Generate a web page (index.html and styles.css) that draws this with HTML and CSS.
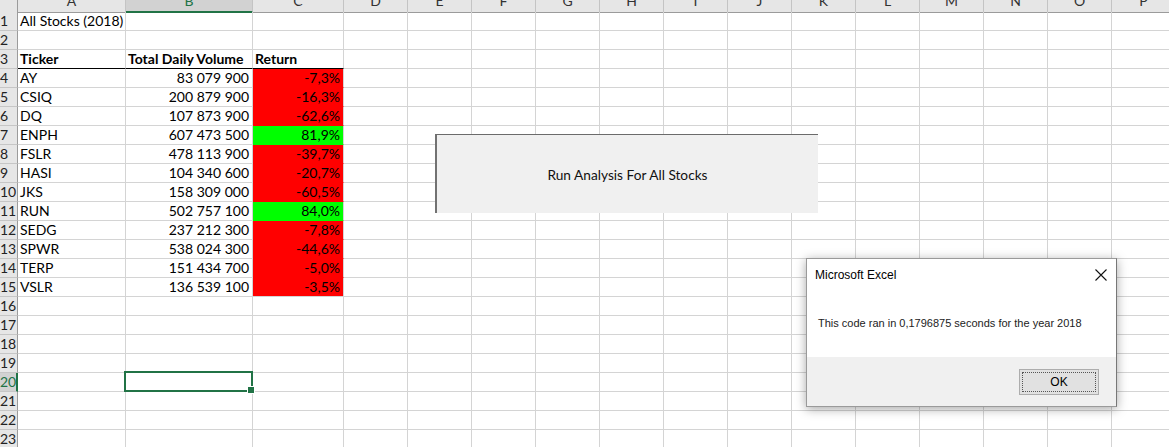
FILE: index.html
```html
<!DOCTYPE html>
<html>
<head>
<meta charset="utf-8">
<title>All Stocks (2018)</title>
<link rel="stylesheet" href="styles.css">
</head>
<body>
<div class="sheet">
  <div class="grid">
    <div class="row head">
      <div class="corner"></div>
      <div>A</div><div class="hsel">B</div><div>C</div><div>D</div><div>E</div><div>F</div><div>G</div><div>H</div><div>I</div><div>J</div><div>K</div><div>L</div><div>M</div><div>N</div><div>O</div><div>P</div>
    </div>
    <div class="row"><div class="rh">1</div><div class="c">All Stocks (2018)</div><div class="c"></div><div class="c"></div><div class="rest"></div></div>
    <div class="row"><div class="rh">2</div><div class="c"></div><div class="c"></div><div class="c"></div><div class="rest"></div></div>
    <div class="row"><div class="rh">3</div><div class="c b under">Ticker</div><div class="c b under">Total Daily Volume</div><div class="c b under">Return</div><div class="rest"></div></div>
    <div class="row"><div class="rh">4</div><div class="c">AY</div><div class="c num">83 079 900</div><div class="c num neg">-7,3%</div><div class="rest"></div></div>
    <div class="row"><div class="rh">5</div><div class="c">CSIQ</div><div class="c num">200 879 900</div><div class="c num neg">-16,3%</div><div class="rest"></div></div>
    <div class="row"><div class="rh">6</div><div class="c">DQ</div><div class="c num">107 873 900</div><div class="c num neg">-62,6%</div><div class="rest"></div></div>
    <div class="row"><div class="rh">7</div><div class="c">ENPH</div><div class="c num">607 473 500</div><div class="c num pos">81,9%</div><div class="rest"></div></div>
    <div class="row"><div class="rh">8</div><div class="c">FSLR</div><div class="c num">478 113 900</div><div class="c num neg">-39,7%</div><div class="rest"></div></div>
    <div class="row"><div class="rh">9</div><div class="c">HASI</div><div class="c num">104 340 600</div><div class="c num neg">-20,7%</div><div class="rest"></div></div>
    <div class="row"><div class="rh">10</div><div class="c">JKS</div><div class="c num">158 309 000</div><div class="c num neg">-60,5%</div><div class="rest"></div></div>
    <div class="row"><div class="rh">11</div><div class="c">RUN</div><div class="c num">502 757 100</div><div class="c num pos">84,0%</div><div class="rest"></div></div>
    <div class="row"><div class="rh">12</div><div class="c">SEDG</div><div class="c num">237 212 300</div><div class="c num neg">-7,8%</div><div class="rest"></div></div>
    <div class="row"><div class="rh">13</div><div class="c">SPWR</div><div class="c num">538 024 300</div><div class="c num neg">-44,6%</div><div class="rest"></div></div>
    <div class="row"><div class="rh">14</div><div class="c">TERP</div><div class="c num">151 434 700</div><div class="c num neg">-5,0%</div><div class="rest"></div></div>
    <div class="row"><div class="rh">15</div><div class="c">VSLR</div><div class="c num">136 539 100</div><div class="c num neg last">-3,5%</div><div class="rest"></div></div>
    <div class="row"><div class="rh">16</div><div class="c"></div><div class="c"></div><div class="c"></div><div class="rest"></div></div>
    <div class="row"><div class="rh">17</div><div class="c"></div><div class="c"></div><div class="c"></div><div class="rest"></div></div>
    <div class="row"><div class="rh">18</div><div class="c"></div><div class="c"></div><div class="c"></div><div class="rest"></div></div>
    <div class="row"><div class="rh">19</div><div class="c"></div><div class="c"></div><div class="c"></div><div class="rest"></div></div>
    <div class="row"><div class="rh rsel">20</div><div class="c"></div><div class="c sel"></div><div class="c"></div><div class="rest"></div></div>
    <div class="row"><div class="rh">21</div><div class="c"></div><div class="c"></div><div class="c"></div><div class="rest"></div></div>
    <div class="row"><div class="rh">22</div><div class="c"></div><div class="c"></div><div class="c"></div><div class="rest"></div></div>
    <div class="row"><div class="rh">23</div><div class="c"></div><div class="c"></div><div class="c"></div><div class="rest"></div></div>
  </div>

  <div class="macro-btn">Run Analysis For All Stocks</div>

  <div class="dialog">
    <div class="dlg-title">
      <span>Microsoft Excel</span>
      <svg class="dlg-close" width="12" height="12" viewBox="0 0 12 12"><path d="M0.5 0.5 L11.5 11.5 M11.5 0.5 L0.5 11.5" stroke="#111" stroke-width="1.1" fill="none"/></svg>
    </div>
    <div class="dlg-body">This code ran in 0,1796875 seconds for the year 2018</div>
    <div class="dlg-foot">
      <div class="dlg-ok"><span>OK</span></div>
    </div>
  </div>
</div>
</body>
</html>
```

FILE: styles.css
```css
* { box-sizing: border-box; }
html, body { margin: 0; padding: 0; background: #fff; overflow: hidden; }
body {
  font-family: Lato, "Liberation Sans", sans-serif;
  font-size: 14px;
  color: #000;
}
.sheet {
  position: relative;
  width: 1169px;
  height: 447px;
  overflow: hidden;
}
.grid { margin-top: -9px; }
.row {
  display: grid;
  grid-template-columns: 18px 108px 127px 91px repeat(13, 64px);
  height: 19px;
}
.row.head { height: 21px; }
.head > div {
  background: #e6e6e6;
  border-right: 1px solid #c4c4c4;
  border-bottom: 1px solid #9b9b9b;
  text-align: center;
  line-height: 20px;
  color: #333;
}
.head > .corner { background: #e6e6e6; border-right: 1px solid #9b9b9b; }
.head > .hsel {
  background: #d2d2d2;
  color: #217346;
  border-bottom: 2px solid #217346;
}
.rh {
  background: #e6e6e6;
  border-right: 1px solid #9b9b9b;
  border-bottom: 1px solid #c6c6c6;
  line-height: 18px;
  padding-left: 0;
  color: #222;
  white-space: nowrap;
  overflow: hidden;
}
.rh.rsel {
  background: #d2d2d2;
  color: #217346;
  border-right: 2px solid #217346;
}
.c {
  border-right: 1px solid #d4d4d4;
  border-bottom: 1px solid #d4d4d4;
  padding: 0 2px 0 2px;
  line-height: 18px;
  white-space: nowrap;
  position: relative;
}
.rest {
  grid-column: 5 / -1;
  border-bottom: 1px solid #d4d4d4;
  background: repeating-linear-gradient(to right, transparent 0 63px, #d4d4d4 63px 64px);
}
.b { font-weight: 700; }
.under { border-bottom-color: #000; }
.num { text-align: right; padding-right: 3px; }
.neg { background: #ff0000; border-bottom-color: #ff0000; }
.pos { background: #00ff00; border-bottom-color: #00ff00; }
.neg.last { border-bottom-color: #d4d4d4; }

.sel::after {
  content: "";
  position: absolute;
  left: -2px;
  top: -2px;
  right: -1px;
  bottom: -1px;
  border: 2px solid #217346;
}
.sel::before {
  content: "";
  position: absolute;
  right: -3px;
  bottom: -3px;
  width: 6px;
  height: 6px;
  background: #217346;
  border: 1px solid #fff;
  z-index: 2;
}

.macro-btn {
  position: absolute;
  left: 435px;
  top: 134px;
  width: 383px;
  height: 79px;
  background: #f0f0f0;
  border-top: 1px solid #6b6b6b;
  border-left: 2px solid #727272;
  display: flex;
  align-items: center;
  justify-content: center;
  font-size: 13.7px;
  color: #111;
}

.dialog {
  position: absolute;
  left: 806px;
  top: 258px;
  width: 311px;
  height: 149px;
  background: #fff;
  border: 1px solid #9a9a9a;
  border-right-color: #777;
  box-shadow: 0 2px 10px rgba(0, 0, 0, 0.35);
  display: flex;
  flex-direction: column;
  font-family: "Liberation Sans", Arial, sans-serif;
  font-size: 12px;
}
.dlg-title {
  height: 31px;
  display: flex;
  align-items: center;
  justify-content: space-between;
  padding: 0 9px 0 8px;
  color: #000;
}
.dlg-body {
  height: 67px;
  padding: 27px 0 0 11px;
  font-size: 11px;
  color: #222;
  white-space: nowrap;
}
.dlg-foot {
  flex: 1;
  background: #f0f0f0;
  display: flex;
  justify-content: flex-end;
  align-items: flex-start;
  padding: 12px 17px 0 0;
}
.dlg-ok {
  width: 80px;
  height: 26px;
  background: #e1e1e1;
  border: 1px solid #adadad;
  padding: 2px;
}
.dlg-ok span {
  display: flex;
  width: 100%;
  height: 100%;
  align-items: center;
  justify-content: center;
  border: 1px dotted #555;
  color: #000;
  font-size: 12px;
}
```
